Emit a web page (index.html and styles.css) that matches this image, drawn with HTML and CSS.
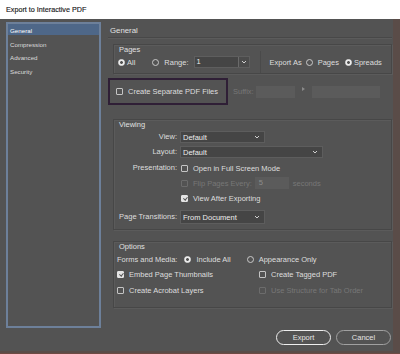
FILE: index.html
```html
<!DOCTYPE html>
<html lang="en">
<head>
    <meta charset="UTF-8">
    <title>Export to Interactive PDF</title>
    <link rel="stylesheet" href="styles.css">
</head>

<body>

<!-- Window title -->
<div class="titlebar">Export to Interactive PDF</div>

<div class="window">
<div class="dialog">

    <!-- Section list -->
    <ul class="sidebar">
        <li class="selected">General</li>
        <li>Compression</li>
        <li>Advanced</li>
        <li>Security</li>
    </ul>

    <div class="pane">
        <div class="pane-title">General</div>

        <!-- Pages -->
        <div class="group pages">
            <div class="group-title">Pages</div>
            <div class="row">
                <span class="radio on"></span><span class="gap-s">All</span>
                <span class="radio range-radio"></span><span class="gap-m">Range:</span>
                <div class="range-field">
                    <span class="range-value">1</span>
                    <span class="range-btn"><svg width="6" height="4"><path d="M1 1l2 2 2-2" stroke="#cfcfcf" fill="none"/></svg></span>
                </div>
                <span class="divider"></span>
                <span class="export-as">Export As</span>
                <span class="radio export-radio"></span><span class="gap-m">Pages</span>
                <span class="radio on spreads-radio"></span><span class="gap-s">Spreads</span>
            </div>
        </div>

        <!-- Separate files -->
        <div class="separate-row">
            <div class="separate-box">
                <span class="check"></span><span class="gap-m">Create Separate PDF Files</span>
            </div>
            <span class="suffix">Suffix:</span>
            <span class="field off suffix-a"></span>
            <span class="arrow"></span>
            <span class="field off suffix-b"></span>
        </div>

        <!-- Viewing -->
        <div class="group viewing">
            <div class="group-title">Viewing</div>
            <div class="form-grid">
                <span class="label r-view">View:</span>
                <div class="select w-short r-view">Default<svg width="6" height="4"><path d="M1 1l2 2 2-2" stroke="#cfcfcf" fill="none"/></svg></div>

                <span class="label r-layout">Layout:</span>
                <div class="select w-long r-layout">Default<svg width="6" height="4"><path d="M1 1l2 2 2-2" stroke="#cfcfcf" fill="none"/></svg></div>

                <span class="label r-pres">Presentation:</span>
                <div class="row r-pres"><span class="check push"></span><span class="gap-m">Open in Full Screen Mode</span></div>

                <span class="label r-flip"></span>
                <div class="row r-flip dim">
                    <span class="check off push"></span><span class="gap-m">Flip Pages Every:</span>
                    <span class="field off flip-field">5</span>
                    <span class="seconds">seconds</span>
                </div>

                <span class="label r-after"></span>
                <div class="row r-after"><span class="check on push"></span><span class="gap-m">View After Exporting</span></div>

                <span class="label r-trans">Page Transitions:</span>
                <div class="select w-short tall r-trans">From Document<svg width="6" height="4"><path d="M1 1l2 2 2-2" stroke="#cfcfcf" fill="none"/></svg></div>
            </div>
        </div>

        <!-- Options -->
        <div class="group options">
            <div class="group-title">Options</div>
            <div class="row forms-row">
                <span>Forms and Media:</span>
                <span class="radio on include-radio"></span><span class="gap-m">Include All</span>
                <span class="radio appearance-radio"></span><span class="gap-m">Appearance Only</span>
            </div>
            <div class="option-grid">
                <div class="row o-1"><span class="check on"></span><span class="gap-m">Embed Page Thumbnails</span></div>
                <div class="row o-1"><span class="check"></span><span class="gap-m">Create Tagged PDF</span></div>
                <div class="row o-2"><span class="check"></span><span class="gap-m">Create Acrobat Layers</span></div>
                <div class="row o-2 dim"><span class="check off"></span><span class="gap-m">Use Structure for Tab Order</span></div>
            </div>
        </div>

        <!-- Buttons -->
        <div class="actions">
            <button type="button" class="btn primary">Export</button>
            <button type="button" class="btn">Cancel</button>
        </div>
    </div>

</div>
</div>

</body>
</html>
```

FILE: styles.css
```css
/* Page */
body {
    margin: 0;
    width: 400px;
    height: 354px;
    overflow: hidden;
    font-family: "Liberation Sans", Arial, sans-serif;
    font-size: 7.5px;
    color: #dedede;
    background-color: #ffffff;
}

/* Title bar */
.titlebar {
    height: 19px;
    line-height: 20px;
    padding-left: 6px;
    font-size: 7.2px;
    color: #1a1a1a;
    -webkit-text-stroke: 0.15px #1a1a1a;
    background-color: #ffffff;
}

/* Window frame (brownish edge right and bottom) */
.window {
    height: 335px;
    padding: 0 7px 2px 0;
    box-sizing: border-box;
    background-color: #5a4c48;
    border-bottom: 1px solid #6e4a43;
}

.dialog {
    display: flex;
    height: 332px;
    padding: 3px 0 0 6px;
    box-sizing: border-box;
    background-color: #535353;
}

/* Sidebar list */
.sidebar {
    width: 95px;
    height: 306px;
    margin: 0;
    padding: 0;
    list-style: none;
    box-sizing: border-box;
    border: 2px solid #6d809a;
    font-size: 6.2px;
    color: #dcdcdc;
}

.sidebar li {
    height: 11px;
    line-height: 13px;
    margin-bottom: 2.5px;
    padding-left: 2px;
}

.sidebar li.selected {
    background-color: #4e6788;
    color: #ffffff;
}

/* Right pane */
.pane {
    width: 284px;
    margin-left: 7px;
}

.pane-title {
    height: 15px;
    line-height: 17px;
    padding-left: 2px;
    font-size: 7.8px;
    color: #e2e2e2;
    border-bottom: 1px solid #484848;
    box-shadow: 0 1px 0 #5b5b5b;
}

/* Group boxes */
.group {
    margin-left: 5px;
    border: 1px solid #474747;
    box-shadow: inset 1px 1px 0 #5b5b5b, 1px 1px 0 #5b5b5b;
}

.group-title {
    height: 9px;
    line-height: 10px;
    padding-left: 5px;
    color: #e0e0e0;
}

.row {
    display: flex;
    align-items: center;
    height: 12px;
    white-space: nowrap;
}

.gap-s { margin-left: 2px; }
.gap-m { margin-left: 5px; }

/* Radios and checkboxes */
.radio {
    flex: none;
    width: 5px;
    height: 5px;
    border: 1px solid #c9c9c9;
    border-radius: 50%;
}

.radio.on {
    border-color: #ececec;
    background: radial-gradient(circle, #535353 0 1.2px, #ececec 1.6px);
}

.check {
    flex: none;
    position: relative;
    width: 5px;
    height: 5px;
    border: 1px solid #c4c4c4;
    border-radius: 1px;
}

.check.on {
    border-color: #e4e4e4;
    background-color: #e4e4e4;
}

.check.on::after {
    content: "";
    position: absolute;
    left: 1.5px;
    top: 0;
    width: 1.5px;
    height: 3px;
    border: solid #535353;
    border-width: 0 1px 1px 0;
    transform: rotate(40deg);
}

.check.off {
    border-color: #6c6c6c;
}

.check.push {
    margin-left: 1px;
}

.dim {
    color: #777777;
}

/* Pages row */
.pages {
    margin-top: 6px;
    height: 30px;
    box-sizing: border-box;
    padding: 0 4px 0 4px;
}

.pages .group-title {
    padding-left: 1px;
}

.pages .row {
    margin-top: 2px;
}

.range-radio { margin-left: 17px; }

.range-field {
    display: flex;
    width: 56px;
    height: 12px;
    margin-left: 5px;
    box-sizing: border-box;
    border: 1px solid #5e5e5e;
    background-color: #454545;
}

.range-value {
    flex: 1;
    line-height: 10px;
    padding-left: 2px;
    color: #ececec;
}

.range-btn {
    display: flex;
    align-items: center;
    justify-content: center;
    width: 10px;
    border-left: 1px solid #6a6a6a;
    background-color: #4b4b4b;
}

.divider {
    width: 1px;
    height: 22px;
    margin-left: 10px;
    background-color: #4a4a4a;
}

.export-as { margin-left: 9px; }
.export-radio { margin-left: 4px; }
.spreads-radio { margin-left: 6px; }

/* Separate PDF files row */
.separate-row {
    display: flex;
    align-items: center;
    margin-top: 4px;
    white-space: nowrap;
}

.separate-box {
    display: flex;
    align-items: center;
    width: 120px;
    height: 27px;
    padding-left: 6px;
    box-sizing: border-box;
    border: 2px solid #2f1f36;
}

.suffix {
    margin-left: 5px;
    color: #777777;
}

.field {
    height: 12px;
    box-sizing: border-box;
    line-height: 12px;
}

.field.off {
    background-color: #5b5b5b;
}

.suffix-a {
    width: 39px;
    margin-left: 2px;
}

.suffix-b {
    width: 68px;
    margin-left: 7px;
}

.arrow {
    width: 0;
    height: 0;
    margin: -5px 0 0 7px;
    border-style: solid;
    border-width: 2.5px 0 2.5px 3px;
    border-color: transparent transparent transparent #8a8a8a;
}

/* Viewing */
.viewing {
    margin-top: 14px;
    padding: 0 4px 5px 3px;
}

.viewing .group-title {
    padding-left: 2px;
}

.form-grid {
    display: grid;
    grid-template-columns: 60px 1fr;
    column-gap: 3px;
    align-items: center;
}

.form-grid .label {
    height: 12px;
    line-height: 12px;
    text-align: right;
    white-space: nowrap;
}

.r-view { margin-top: 2px; }
.r-layout { margin-top: 3px; }
.r-pres { margin-top: 4px; }
.r-flip { margin-top: 3px; }
.r-after { margin-top: 3px; }
.r-trans { margin-top: 6px; }

.select {
    display: flex;
    align-items: center;
    justify-content: space-between;
    height: 12px;
    padding: 0 4px 0 2px;
    box-sizing: border-box;
    border: 1px solid #5d5d5d;
    background-color: #454545;
    color: #ececec;
    white-space: nowrap;
}

.select.tall {
    height: 14px;
}

.w-short { width: 85px; }
.w-long { width: 143px; }

.flip-field {
    width: 34px;
    margin-left: 3px;
    padding-left: 4px;
    color: #8c8c8c;
}

.seconds { margin-left: 4px; }

/* Options */
.options {
    margin-top: 11px;
    height: 67px;
    box-sizing: border-box;
    padding: 0 4px 0 3px;
}

.options .group-title {
    padding-left: 2px;
}

.forms-row {
    margin-top: 2px;
}

.include-radio { margin-left: 7px; }
.appearance-radio { margin-left: 16px; }

.option-grid {
    display: grid;
    grid-template-columns: 142px 1fr;
}

.o-1 { margin-top: 3px; }
.o-2 { margin-top: 4px; }

/* Buttons */
.actions {
    display: flex;
    justify-content: flex-end;
    gap: 5px;
    margin-top: 22px;
    padding-right: 1px;
}

.btn {
    width: 55px;
    height: 15px;
    padding: 0;
    font-family: inherit;
    font-size: 7.5px;
    color: #e4e4e4;
    background-color: transparent;
    border: 1.5px solid #a0a0a0;
    border-radius: 8px;
    cursor: pointer;
}

.btn.primary {
    border-color: #eeeeee;
}
```
